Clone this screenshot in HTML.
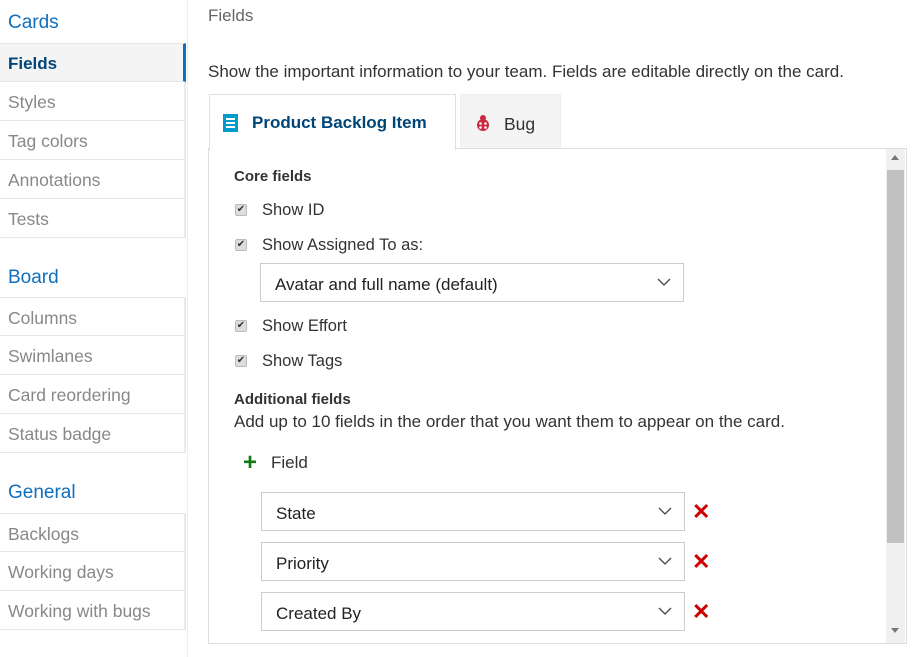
<!DOCTYPE html>
<html><head><style>
*{margin:0;padding:0;box-sizing:border-box}
body{width:921px;height:657px;background:#fff;font-family:"Liberation Sans",sans-serif;color:#333;position:relative;overflow:hidden}
.a{position:absolute;white-space:nowrap}
.h{font-size:19px;color:#106ebe;left:8px}
.it{position:absolute;left:0;width:186px;height:39px;border-bottom:1px solid #e6e6e6;border-right:2px solid #eaeaea;font-size:17.5px;color:#888;padding-left:8px;line-height:40px}
.act{background:#f4f4f4;color:#004578;font-weight:bold;border-right:3px solid #106ebe;font-size:17px}
.cb{position:absolute;left:235px;width:12px;height:12px;background:#ddd;border:1px solid #bbb;border-radius:2px;font-size:10px;line-height:10px;text-align:center;color:#333}
.lbl{position:absolute;left:262px;font-size:16.5px;color:#333}
.dd{position:absolute;left:261px;width:424px;height:39px;border:1px solid #ccc;font-size:17px;padding-left:14px;line-height:42px;color:#222}
.dd svg{position:absolute;right:12px;top:14px}
.x{position:absolute;left:692px;font-size:22px;color:#c00;font-weight:bold}
</style></head><body>
<div class="a" style="left:187px;top:0;width:1px;height:657px;background:#eee"></div>
<div class="a h" style="top:12px">Cards</div>
<div class="it act" style="top:43px;border-top:1px solid #e6e6e6">Fields</div>
<div class="it" style="top:82px">Styles</div>
<div class="it" style="top:121px">Tag colors</div>
<div class="it" style="top:160px">Annotations</div>
<div class="it" style="top:199px">Tests</div>
<div class="a h" style="top:267px">Board</div>
<div class="it" style="top:297px;border-top:1px solid #e6e6e6">Columns</div>
<div class="it" style="top:336px">Swimlanes</div>
<div class="it" style="top:375px">Card reordering</div>
<div class="it" style="top:414px">Status badge</div>
<div class="a h" style="top:482px">General</div>
<div class="it" style="top:513px;border-top:1px solid #e6e6e6">Backlogs</div>
<div class="it" style="top:552px">Working days</div>
<div class="it" style="top:591px">Working with bugs</div>

<div class="a" style="left:208px;top:6px;font-size:17px;color:#666">Fields</div>
<div class="a" style="left:208px;top:62px;font-size:17px;color:#333">Show the important information to your team. Fields are editable directly on the card.</div>
<div class="a" style="left:208px;top:148px;width:699px;height:496px;border:1px solid #ddd"></div>
<div class="a" style="left:209px;top:94px;width:247px;height:56px;border:1px solid #e0e0e0;border-bottom:none;background:#fff"></div>
<div class="a" style="left:223px;top:114px;width:15px;height:18px;background:#009ccc"><div style="margin:4px 3px;height:10px;border-top:2px solid #fff;border-bottom:2px solid #fff;position:relative"><div style="position:absolute;top:2px;left:0;right:0;border-top:2px solid #fff"></div></div></div>
<div class="a" style="left:252px;top:113px;font-size:17px;font-weight:bold;color:#004578">Product Backlog Item</div>
<div class="a" style="left:460px;top:94px;width:101px;height:54px;background:#f4f4f4;border:1px solid #eee;border-bottom:none"></div>
<svg class="a" style="left:475px;top:114px" width="16" height="18" viewBox="0 0 16 18"><circle cx="8" cy="4" r="3" fill="#cc293d"/><ellipse cx="8" cy="11" rx="6" ry="6" fill="#cc293d"/><circle cx="5.5" cy="9.5" r="1.3" fill="#fff"/><circle cx="10.5" cy="9.5" r="1.3" fill="#fff"/><circle cx="5.5" cy="13.5" r="1.3" fill="#fff"/><circle cx="10.5" cy="13.5" r="1.3" fill="#fff"/></svg>
<div class="a" style="left:504px;top:114px;font-size:17.5px;color:#333">Bug</div>

<div class="a" style="left:886px;top:149px;width:19px;height:494px;background:#f0f0f0"></div>
<div class="a" style="left:887px;top:170px;width:17px;height:373px;background:#c1c1c1"></div>
<div class="a" style="left:891px;top:155px;width:0;height:0;border:4px solid transparent;border-bottom:5px solid #777;border-top:none"></div>
<div class="a" style="left:891px;top:628px;width:0;height:0;border:4px solid transparent;border-top:5px solid #777;border-bottom:none"></div>

<div class="a" style="left:234px;top:168px;font-size:15px;font-weight:600;color:#333">Core fields</div>
<div class="cb" style="top:204px">✔</div><div class="lbl" style="top:201px">Show ID</div>
<div class="cb" style="top:239px">✔</div><div class="lbl" style="top:236px">Show Assigned To as:</div>
<div class="dd" style="left:260px;top:263px">Avatar and full name (default)<svg width="14" height="9"><path d="M1 1l6 6 6-6" stroke="#444" fill="none" stroke-width="1.3"/></svg></div>
<div class="cb" style="top:320px">✔</div><div class="lbl" style="top:317px">Show Effort</div>
<div class="cb" style="top:355px">✔</div><div class="lbl" style="top:352px">Show Tags</div>
<div class="a" style="left:234px;top:391px;font-size:15px;font-weight:600">Additional fields</div>
<div class="a" style="left:234px;top:412px;font-size:17px">Add up to 10 fields in the order that you want them to appear on the card.</div>
<div class="a" style="left:243px;top:449px;font-size:24px;color:#107c10;font-weight:bold">+</div>
<div class="a" style="left:271px;top:453px;font-size:17px">Field</div>
<div class="dd" style="top:492px">State<svg width="14" height="9"><path d="M1 1l6 6 6-6" stroke="#444" fill="none" stroke-width="1.3"/></svg></div><div class="x" style="top:499px">✕</div>
<div class="dd" style="top:542px">Priority<svg width="14" height="9"><path d="M1 1l6 6 6-6" stroke="#444" fill="none" stroke-width="1.3"/></svg></div><div class="x" style="top:549px">✕</div>
<div class="dd" style="top:592px">Created By<svg width="14" height="9"><path d="M1 1l6 6 6-6" stroke="#444" fill="none" stroke-width="1.3"/></svg></div><div class="x" style="top:599px">✕</div>
</body></html>
